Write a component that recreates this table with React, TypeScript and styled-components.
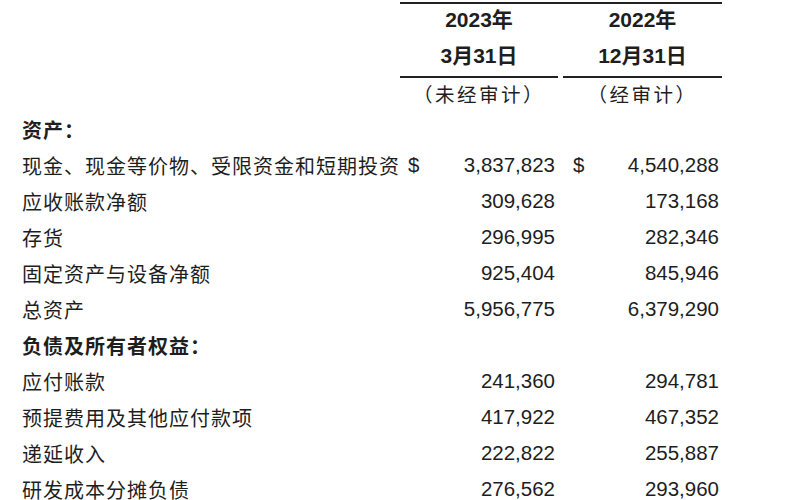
import React from 'react';
import styled, { createGlobalStyle } from 'styled-components';

const GlobalStyle = createGlobalStyle`
  html, body {
    margin: 0;
    padding: 0;
    background: #ffffff;
  }
  body {
    width: 800px;
    height: 500px;
    overflow: hidden;
    font-family: "Liberation Sans", "Noto Sans CJK SC", sans-serif;
    color: #1e1e1e;
  }
`;

type Line = {
  label: string;
  a?: string;
  b?: string;
  dollar?: boolean;
  heading?: boolean;
};

const lines: Line[] = [
  { label: '资产：', heading: true },
  { label: '现金、现金等价物、受限资金和短期投资', a: '3,837,823', b: '4,540,288', dollar: true },
  { label: '应收账款净额', a: '309,628', b: '173,168' },
  { label: '存货', a: '296,995', b: '282,346' },
  { label: '固定资产与设备净额', a: '925,404', b: '845,946' },
  { label: '总资产', a: '5,956,775', b: '6,379,290' },
  { label: '负债及所有者权益：', heading: true },
  { label: '应付账款', a: '241,360', b: '294,781' },
  { label: '预提费用及其他应付款项', a: '417,922', b: '467,352' },
  { label: '递延收入', a: '222,822', b: '255,887' },
  { label: '研发成本分摊负债', a: '276,562', b: '293,960' },
];

const App = () => {
  return (
    <>
      <GlobalStyle />
      <Sheet>
        <Header>
          <HeadColumn>
            <HeadBold $height={28}>2023年</HeadBold>
            <HeadBold $height={44} $rule>3月31日</HeadBold>
            <HeadNote>（未经审计）</HeadNote>
          </HeadColumn>
          <HeadColumn $second>
            <HeadBold $height={28}>2022年</HeadBold>
            <HeadBold $height={44} $rule>12月31日</HeadBold>
            <HeadNote>（经审计）</HeadNote>
          </HeadColumn>
        </Header>
        <Body>
          {lines.map((l) => (
            <Row key={l.label}>
              <Label $heading={l.heading}>{l.label}</Label>
              <Amount>
                <Dollar>{l.dollar ? '$' : ''}</Dollar>
                <span>{l.a}</span>
              </Amount>
              <Amount $second>
                <Dollar>{l.dollar ? '$' : ''}</Dollar>
                <span>{l.b}</span>
              </Amount>
            </Row>
          ))}
        </Body>
      </Sheet>
    </>
  );
};

const Sheet = styled.div`
  padding-left: 22px;
`;

const Header = styled.div`
  display: flex;
  margin-left: 378px;
  margin-top: 2px;
  width: 322px;
  border-top: 2px solid #222;
`;

const HeadColumn = styled.div<{ $second?: boolean }>`
  width: ${(p) => (p.$second ? '159px' : '158px')};
  margin-left: ${(p) => (p.$second ? '5px' : '0')};
  display: flex;
  flex-direction: column;
  align-items: center;
`;

const HeadBold = styled.div<{ $height: number; $rule?: boolean }>`
  height: ${(p) => p.$height}px;
  width: 100%;
  display: flex;
  align-items: center;
  justify-content: center;
  font-size: 21px;
  font-weight: 700;
  border-bottom: ${(p) => (p.$rule ? '2px solid #222' : 'none')};
  box-sizing: content-box;
`;

const HeadNote = styled.div`
  height: 30px;
  display: flex;
  align-items: center;
  font-size: 19.5px;
  letter-spacing: 2.5px;
`;

const Body = styled.div`
  margin-top: 3px;
`;

const Row = styled.div`
  display: flex;
  align-items: center;
  height: 36px;
`;

const Label = styled.div<{ $heading?: boolean }>`
  width: 378px;
  font-size: 20px;
  letter-spacing: 1px;
  font-weight: ${(p) => (p.$heading ? 700 : 400)};
  white-space: nowrap;
`;

const Amount = styled.div<{ $second?: boolean }>`
  width: ${(p) => (p.$second ? '159px' : '158px')};
  margin-left: ${(p) => (p.$second ? '5px' : '0')};
  box-sizing: border-box;
  padding-left: ${(p) => (p.$second ? '10px' : '8px')};
  padding-right: 3px;
  display: flex;
  justify-content: space-between;
  font-size: 20.5px;
`;

const Dollar = styled.span`
  display: inline-block;
  width: 12px;
`;

export default App;
